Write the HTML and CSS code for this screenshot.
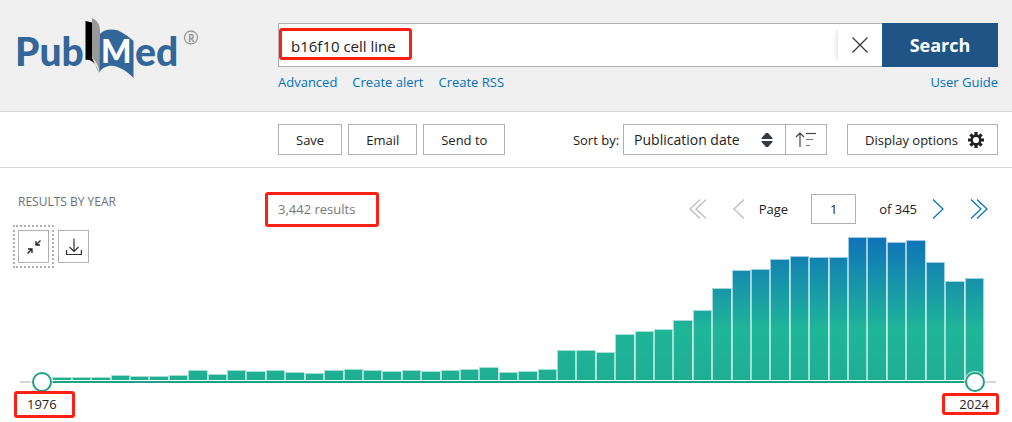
FILE: index.html
```html
<!DOCTYPE html>
<html lang="en">
<head>
<meta charset="utf-8">
<title>b16f10 cell line - PubMed</title>
<link rel="stylesheet" href="styles.css">
</head>
<body>
<header class="header">
  <a class="logo" href="#" aria-label="PubMed">
    <svg width="184" height="66" viewBox="0 0 184 66">
      <text class="logo-word" x="-3" y="50">Pub</text>
      <path d="M67.500 5 L74 6.500 V42 L81.500 57.500 C78 48 74 43 67.500 44 Z" fill="#000"/>
      <path d="M74 2 C79 4 82 9 82 14 V56 C80 50 78 45 74 41.500 Z" fill="#999"/>
      <path d="M82 18 C86 13 94 12.500 100 14.500 C106 17 111 21 115.500 25 V62 C108 54 98 49 91 50 C86 51 83 53 81.500 57 Z" fill="#336699"/>
      <text class="logo-m" x="83" y="47">M</text>
      <text class="logo-word" x="117" y="50">ed</text>
      <circle cx="173" cy="21.500" r="6.500" fill="none" stroke="#999" stroke-width="1.300"/>
      <text class="logo-reg" x="170" y="25.500">R</text>
    </svg>
  </a>
  <form class="search">
    <div class="search-row">
      <div class="search-field">
        <input class="search-input" type="text" value="b16f10 cell line" aria-label="Search term">
        <button class="clear" type="button" aria-label="Clear search">
          <svg width="16" height="16" viewBox="0 0 16 16"><path d="M.5.5l15 15M15.500.5l-15 15" stroke="#333" stroke-width="1.200"/></svg>
        </button>
        <span class="mark mark-query"></span>
      </div>
      <button class="search-button" type="button">Search</button>
    </div>
    <nav class="search-links">
      <a href="#">Advanced</a>
      <a href="#">Create alert</a>
      <a href="#">Create RSS</a>
      <a class="guide" href="#">User Guide</a>
    </nav>
  </form>
</header>

<div class="toolbar">
  <div class="actions">
    <button class="button" type="button">Save</button>
    <button class="button" type="button">Email</button>
    <button class="button" type="button">Send to</button>
  </div>
  <div class="sort">
    <label for="sort">Sort by:</label>
    <div class="sort-box">
      <select id="sort" class="sort-select"><option>Publication date</option></select>
      <svg class="sort-arrows" width="12" height="16" viewBox="0 0 12 16"><path d="M5 1h2l4.500 5v1H.5V6zM.5 9h11v1L7 15H5L.5 10z" fill="#323a45"/></svg>
      <button class="order" type="button" aria-label="Sort order">
        <svg width="22" height="16" viewBox="0 0 22 16" fill="none" stroke="#444" stroke-width="1.200"><path d="M5 15V1M1 5l4-4 4 4"/><path d="M11 1.500h10"/><path d="M11 7.500h7M11 13.500h4" stroke="#777"/></svg>
      </button>
    </div>
  </div>
  <button class="button display" type="button">Display options
    <svg width="16" height="16" viewBox="0 0 16 16"><g stroke="#212121" stroke-width="3.200"><path d="M8 0v16M0 8h16M2.400 2.400l11.200 11.200M13.600 2.400L2.400 13.600"/></g><circle cx="8" cy="8" r="4.300" fill="#fff" stroke="#212121" stroke-width="2.400"/></svg>
  </button>
</div>

<main class="results">
  <div class="summary">
    <h2 class="heading">RESULTS BY YEAR</h2>
    <div class="count">3,442 results<span class="mark mark-count"></span></div>
    <nav class="pager">
      <button class="arrow" type="button" aria-label="First page" disabled><svg width="18" height="20" viewBox="0 0 18 20"><path d="M11 .5L1 10l10 9.500M17 .5L7 10l10 9.500"/></svg></button>
      <button class="arrow" type="button" aria-label="Previous page" disabled><svg width="12" height="20" viewBox="0 0 12 20"><path d="M11 .5L1 10l10 9.500"/></svg></button>
      <label class="page-label" for="page">Page</label>
      <input id="page" class="page-input" type="text" value="1">
      <span class="page-total">of 345</span>
      <button class="arrow" type="button" aria-label="Next page"><svg width="12" height="20" viewBox="0 0 12 20"><path d="M1 .5L11 10 1 19.500"/></svg></button>
      <button class="arrow" type="button" aria-label="Last page"><svg width="18" height="20" viewBox="0 0 18 20"><path d="M1 .5L11 10 1 19.500M7 .5L17 10 7 19.500"/></svg></button>
    </nav>
  </div>
  <div class="timeline">
    <div class="tools">
      <button class="tool focused" type="button" aria-label="Collapse chart"><svg width="14" height="14" viewBox="0 0 14 14" fill="none" stroke="#212121" stroke-width="1.300"><path d="M13.500.5L9 5M9 1v4h4M.5 13.500L5 9M1 9h4v4"/></svg></button>
      <button class="tool" type="button" aria-label="Download chart data"><svg width="16" height="18" viewBox="0 0 16 18" fill="none" stroke="#333" stroke-width="1.200"><path d="M8 .5V13M3.500 9L8 13.500 12.500 9M.6 12v4.500h14.800V12"/></svg></button>
    </div>
    <div class="bars" id="bars"></div>
  </div>
  <div class="slider">
    <span class="track"></span>
    <input class="range" type="range" min="1976" max="2024" value="1976" aria-label="Start year">
    <input class="range" type="range" min="1976" max="2024" value="2024" aria-label="End year">
  </div>
  <div class="years">
    <span class="year">1976<span class="mark mark-start"></span></span>
    <span class="year">2024<span class="mark mark-end"></span></span>
  </div>
</main>
<script src="chart.js"></script>
</body>
</html>
```

FILE: styles.css
```css
* { box-sizing: border-box; }

body {
  margin: 0;
  background: #fff;
  color: #212121;
  font: 13px/20px "Open Sans", "Noto Sans", sans-serif;
}

button, input, select { font: inherit; color: inherit; margin: 0; border-radius: 0; }
button { padding: 0; cursor: pointer; }
svg { display: block; overflow: visible; }
a { color: #0071bc; text-decoration: none; }

.header {
  display: grid;
  grid-template-columns: 260px 1fr;
  padding: 16px 14px 19px 18px;
  background: #f0f0f0;
  border-bottom: 1px solid #d6d7d9;
}

.logo-word { font: 900 39px Lato, sans-serif; fill: #336699; }
.logo-m { font: 900 32px Lato, sans-serif; fill: #fff; }
.logo-reg { font: 700 10px "Open Sans", sans-serif; fill: #999; }

.search { padding-top: 7px; }
.search-row { display: flex; height: 44px; }
.search-field {
  position: relative;
  display: flex;
  flex: 1;
  background: #fff;
  border: 1px solid #aeb0b5;
  border-right: 0;
}
.search-input {
  flex: 1;
  min-width: 0;
  padding: 2px 12px 0;
  border: 0;
  outline: 0;
  background: none;
  font-size: 15px;
}
.clear {
  display: grid;
  place-items: center;
  width: 44px;
  margin: 3px 0;
  border: 0;
  background: #fff;
  box-shadow: -4px 0 5px -3px #ddd;
}
.search-button {
  width: 116px;
  border: 0;
  background: #205487;
  color: #fff;
  font-size: 18px;
  font-weight: 700;
}
.search-links { display: flex; gap: 15px; padding-top: 5px; }
.guide { margin-left: auto; }

.toolbar {
  display: flex;
  align-items: center;
  padding: 12px 14px 12px 278px;
  border-bottom: 1px solid #d6d7d9;
}
.actions { display: flex; gap: 6px; }
.button {
  height: 31px;
  padding: 0 17px;
  border: 1px solid #aeb0b5;
  background: #fff;
}
.sort { display: flex; align-items: center; gap: 4px; margin-left: auto; }
.sort-box {
  position: relative;
  display: flex;
  height: 31px;
  border: 1px solid #aeb0b5;
}
.sort-select {
  appearance: none;
  width: 161px;
  padding: 0 10px;
  border: 0;
  background: #fff;
  font-size: 14px;
}
.sort-arrows { position: absolute; left: 137px; top: 7px; pointer-events: none; }
.order {
  display: grid;
  place-items: center;
  width: 41px;
  border: 0;
  border-left: 1px solid #aeb0b5;
  background: #fff;
}
.display { display: flex; align-items: center; gap: 10px; margin-left: 20px; padding: 0 13px 0 17px; }

.results { padding: 26px 14px 8px 18px; }
.summary { display: grid; grid-template-columns: 260px 1fr auto; align-items: center; }
.heading { margin: 0; padding-bottom: 14px; color: #6b7078; font-size: 12px; font-weight: 400; line-height: 16px; }
.count { position: relative; justify-self: start; color: #777; }
.pager { display: flex; align-items: center; padding-right: 10px; }
.arrow { border: 0; background: none; color: #0071bc; }
.arrow:disabled { color: #bbb; }
.arrow svg { fill: none; stroke: currentColor; stroke-width: 1.2px; }
.arrow + .arrow { margin-left: 26px; }
.page-label { margin-left: 14px; }
.page-input {
  width: 45px;
  height: 30px;
  margin: 0 23px;
  border: 1px solid #aeb0b5;
  text-align: center;
}
.page-total { margin-right: 15px; }

.timeline { display: grid; grid-template-areas: "stack"; height: 150px; margin-top: 6px; }
.tools, .bars { grid-area: stack; }
.tools { z-index: 1; display: flex; gap: 9px; justify-self: start; align-self: start; }
.tool {
  display: grid;
  place-items: center;
  width: 31px;
  height: 33px;
  border: 1px solid #aeb0b5;
  background: #fff;
}
.focused { outline: 2px dotted #aeb0b5; outline-offset: 3px; }
.bars { display: flex; align-items: flex-end; padding: 0 14px 0 15px; }
.bar {
  flex: 1;
  border: 1px solid #ffffff99;
  border-bottom-width: 0;
  background: linear-gradient(#0f72ba, #1fb698 65%, #1fae94) bottom / 100% 143px no-repeat border-box;
}

.slider { position: relative; height: 20px; margin: -9px 2px 0; }
.slider::before {
  content: "";
  position: absolute;
  inset: 10px 0 auto;
  height: 2px;
  background: #d6d7d9;
}
.track { position: absolute; inset: 10px 22px auto; height: 2px; background: #20a187; box-shadow: 0 0 0 1px #fff; }
.range {
  appearance: none;
  position: absolute;
  inset: 1px 11px auto 12px;
  height: 20px;
  margin: 0;
  background: none;
  pointer-events: none;
}
.range::-webkit-slider-thumb {
  appearance: none;
  width: 20px;
  height: 20px;
  border: 2px solid #20a187;
  border-radius: 50%;
  background: #fff;
  box-shadow: 0 0 0 1px #ffffffaa;
  pointer-events: auto;
}

.years { display: flex; justify-content: space-between; padding: 3px 9px 0; }
.year { position: relative; }

/* Highlight frames laid over the values they point out */
.mark { position: absolute; border: 3px solid #ff1f14; border-radius: 3px; pointer-events: none; }
.mark-query { left: 0; top: 4px; width: 133px; height: 32px; }
.mark-count { inset: -7px -24px -8px -13px; }
.mark-start { inset: -3px -18px -4px -13px; }
.mark-end { inset: -1px -10px -1px -17px; }
```

FILE: chart.js
```js
const heights = [
  3, 3, 3, 3, 5, 4, 4, 5, 10, 6, 10, 9, 10, 8, 7, 10, 11, 10, 9, 10,
  9, 10, 11, 13, 8, 9, 11, 30, 30, 28, 46, 49, 51, 60, 70, 92, 110, 111,
  121, 124, 123, 123, 143, 143, 138, 140, 118, 99, 102
];
const bars = document.getElementById("bars");
for (const height of heights) {
  const bar = document.createElement("div");
  bar.className = "bar";
  bar.style.height = height + "px";
  bars.append(bar);
}
```
